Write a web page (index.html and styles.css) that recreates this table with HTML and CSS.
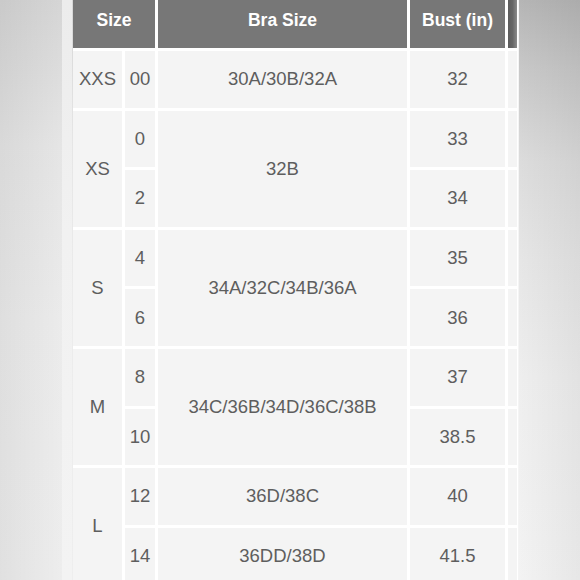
FILE: index.html
```html
<!DOCTYPE html>
<html>
<head>
<meta charset="utf-8">
<link rel="stylesheet" href="styles.css">
</head>
<body>
<div class="page">
  <div class="side-left"><div class="strip"></div></div>
  <div class="chart">
    <div class="cell head span-col">Size</div>
    <div class="cell head">Bra Size</div>
    <div class="cell head">Bust (in)</div>
    <div class="cell head edge"></div>

    <div class="cell">XXS</div>
    <div class="cell">00</div>
    <div class="cell">30A/30B/32A</div>
    <div class="cell">32</div>
    <div class="cell"></div>

    <div class="cell span-row">XS</div>
    <div class="cell top">0</div>
    <div class="cell span-row">32B</div>
    <div class="cell top">33</div>
    <div class="cell"></div>
    <div class="cell low">2</div>
    <div class="cell low">34</div>
    <div class="cell"></div>

    <div class="cell span-row">S</div>
    <div class="cell top">4</div>
    <div class="cell span-row">34A/32C/34B/36A</div>
    <div class="cell top">35</div>
    <div class="cell"></div>
    <div class="cell low">6</div>
    <div class="cell low">36</div>
    <div class="cell"></div>

    <div class="cell span-row">M</div>
    <div class="cell top">8</div>
    <div class="cell span-row">34C/36B/34D/36C/38B</div>
    <div class="cell top">37</div>
    <div class="cell"></div>
    <div class="cell low">10</div>
    <div class="cell low">38.5</div>
    <div class="cell"></div>

    <div class="cell span-row">L</div>
    <div class="cell top">12</div>
    <div class="cell top">36D/38C</div>
    <div class="cell top">40</div>
    <div class="cell"></div>
    <div class="cell low">14</div>
    <div class="cell low">36DD/38D</div>
    <div class="cell low">41.5</div>
    <div class="cell"></div>
  </div>
  <div class="side-right"></div>
</div>
</body>
</html>
```
FILE: styles.css
```css
html, body {
  margin: 0;
  padding: 0;
  width: 580px;
  height: 580px;
  overflow: hidden;
  background: #f2f2f2;
}

.page {
  display: flex;
  width: 580px;
  height: 580px;
  overflow: hidden;
  font-family: "Liberation Sans", Arial, sans-serif;
}

.side-left {
  width: 73px;
  flex: none;
  display: flex;
  justify-content: flex-end;
  background:
    linear-gradient(to right, rgba(0,0,0,0.06) 0%, rgba(0,0,0,0) 90%),
    linear-gradient(to bottom, #d6d6d6 0%, #e6e6e6 25%, #ececec 55%, #eeeeee 100%);
}

.strip {
  width: 10px;
  margin-right: 1px;
  background: linear-gradient(to bottom, #ececec 0%, #f1f1f1 40%, #f3f3f3 100%);
}

.chart {
  flex: none;
  display: grid;
  grid-template-columns: 49px 30px 249px 95px 9px;
  grid-template-rows: 48px;
  grid-auto-rows: 56.6px;
  gap: 3px;
  background: #ffffff;
  width: 445px;
  height: 600px;
  align-content: start;
}

.cell {
  display: flex;
  align-items: center;
  justify-content: center;
  background: #f4f4f4;
  color: #5e5e5e;
  font-size: 18.5px;
  white-space: nowrap;
}

.head {
  background: #777777;
  color: #ffffff;
  font-weight: bold;
  font-size: 17.5px;
  padding-bottom: 7px;
}

.head.edge {
  background: linear-gradient(to right, #5c5c5c 0%, #666 50%, #8a8a8a 100%);
}

.span-col {
  grid-column: span 2;
}

.span-row {
  grid-row: span 2;
}

.side-right {
  flex: 1;
  border-left: 1px solid #f4f4f4;
  background:
    linear-gradient(to right, rgba(0,0,0,0) 0%, rgba(0,0,0,0.05) 100%),
    linear-gradient(to bottom, #b5b5b5 0%, #c8c8c8 12%, #dcdcdc 28%, #e6e6e6 45%, #eeeeee 65%, #f3f3f3 100%);
}
```
